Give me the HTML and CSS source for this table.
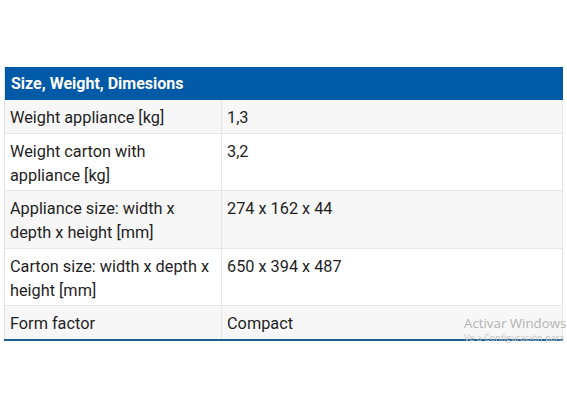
FILE: index.html
```html
<!DOCTYPE html>
<html>
<head>
<meta charset="utf-8">
<link rel="stylesheet" href="styles.css">
</head>
<body>
<div class="page">
  <table class="spec">
    <colgroup>
      <col class="c1">
      <col class="c2">
    </colgroup>
    <thead>
      <tr><th colspan="2">Size, Weight, Dimesions</th></tr>
    </thead>
    <tbody>
      <tr class="odd"><td>Weight appliance [kg]</td><td>1,3</td></tr>
      <tr><td>Weight carton with appliance [kg]</td><td>3,2</td></tr>
      <tr class="odd"><td>Appliance size: width x depth x height [mm]</td><td>274 x 162 x 44</td></tr>
      <tr><td>Carton size: width x depth x height [mm]</td><td>650 x 394 x 487</td></tr>
      <tr class="odd"><td>Form factor</td><td>Compact</td></tr>
    </tbody>
  </table>
  <div class="watermark">
    <div class="wm1">Activar Windows</div>
    <div class="wm2">Ve a Configuración para</div>
  </div>
</div>
</body>
</html>
```
FILE: styles.css
```css
html, body {
  margin: 0;
  padding: 0;
  background: #ffffff;
}
body {
  width: 567px;
  height: 407px;
  overflow: hidden;
  font-family: Roboto, "Liberation Sans", sans-serif;
}
.page {
  position: relative;
  padding: 67px 5px 0 4px;
}
.spec {
  border-collapse: collapse;
  width: 558px;
  table-layout: fixed;
  color: #1f1f1f;
  font-size: 16.3px;
  line-height: 24px;
  border-left: 1px solid #e3e3e3;
  border-bottom: 2px solid #1b5f91;
}
.c1 {
  width: 217px;
}
.c2 {
  width: 341px;
}
.spec th {
  background: #005aa8;
  color: #ffffff;
  text-align: left;
  font-weight: 700;
  font-size: 16px;
  padding: 5px 6px 4px 6px;
  height: 24px;
}
.spec td {
  padding: 6px 6px 2.5px 5px;
  vertical-align: top;
  border-bottom: 1px solid #e6e6e6;
  border-right: 1px solid #e6e6e6;
}
.spec tr.odd td {
  background: #f7f7f7;
}
.spec tbody tr:last-child td {
  border-bottom: none;
}
.watermark {
  position: absolute;
  left: 464px;
  top: 314px;
  color: #b4b4b4;
  white-space: nowrap;
  font-family: "Open Sans", "Liberation Sans", sans-serif;
}
.wm1 {
  font-size: 13.3px;
  line-height: 18px;
}
.wm2 {
  font-size: 9px;
  line-height: 12px;
  color: #c4c4c4;
}
```
